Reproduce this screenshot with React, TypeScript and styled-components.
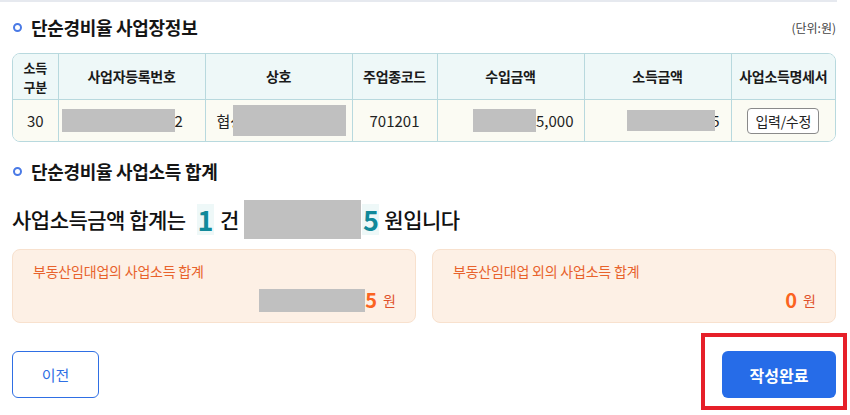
import React from "react";
import styled, { createGlobalStyle } from "styled-components";

const GlobalStyle = createGlobalStyle`
  html, body {
    margin: 0;
    padding: 0;
    background: #fff;
  }
  body {
    font-family: "Noto Sans CJK KR", "Noto Sans", sans-serif;
    color: #111;
  }
`;

const Page = styled.div`
  width: 850px;
  height: 415px;
  overflow: hidden;
  box-sizing: border-box;
  position: relative;
`;

const TopRule = styled.div`
  height: 2px;
  width: 837px;
  background: #e6e9ef;
`;

const Content = styled.div`
  padding: 0 14px 0 12px;
`;

const SectionHeader = styled.div<{ $top: number }>`
  margin-top: ${(p) => p.$top}px;
  height: 24px;
  display: flex;
  align-items: center;
  justify-content: space-between;
`;

const Title = styled.h2`
  margin: 0;
  display: flex;
  align-items: center;
  gap: 9px;
  font-size: 18px;
  font-weight: 700;
  letter-spacing: -0.3px;
  color: #151515;

  &::before {
    content: "";
    width: 5px;
    height: 5px;
    margin-left: 1px;
    border: 2px solid #4a7ae6;
    border-radius: 50%;
  }
`;

const Unit = styled.span`
  font-size: 12px;
  color: #444;
`;

const TableWrap = styled.div`
  margin-top: 14px;
  border: 1px solid #b8d9de;
  border-radius: 8px;
  overflow: hidden;
`;

const Table = styled.table`
  width: 100%;
  border-collapse: collapse;
  table-layout: fixed;
`;

const Th = styled.th<{ $stacked?: boolean }>`
  height: 45px;
  padding: 0;
  background: #eef8f8;
  border-right: 1px solid #b8d9de;
  border-bottom: 1px solid #b8d9de;
  font-size: ${(p) => (p.$stacked ? 13 : 14)}px;
  font-weight: 600;
  letter-spacing: -0.3px;
  line-height: ${(p) => (p.$stacked ? 19 : 17)}px;
  color: #1a1a1a;
  text-align: center;

  &:last-child {
    border-right: none;
  }
`;

const Td = styled.td`
  height: 41px;
  padding: 0;
  background: #fbfbf3;
  border-right: 1px solid #b8d9de;
  font-size: 15px;
  color: #222;
  white-space: nowrap;

  &:last-child {
    border-right: none;
  }
`;

const Cell = styled.div<{ $align?: "left" | "center" | "right"; $pad?: number }>`
  display: flex;
  align-items: center;
  justify-content: ${(p) =>
    p.$align === "left" ? "flex-start" : p.$align === "right" ? "flex-end" : "center"};
  padding: 0 ${(p) => p.$pad ?? 0}px;
  white-space: nowrap;
`;

const Masked = styled.span<{ $w: number; $h: number; $overlap?: number }>`
  display: inline-block;
  width: ${(p) => p.$w}px;
  height: ${(p) => p.$h}px;
  background: #c0c0c0;
  position: relative;
  z-index: 1;
  margin-left: ${(p) => -(p.$overlap ?? 0)}px;
  flex-shrink: 0;
`;

const Tucked = styled.span<{ $by: number }>`
  margin-left: ${(p) => -p.$by}px;
`;

const SmallButton = styled.button`
  width: 72px;
  height: 26px;
  padding: 0;
  border: 1px solid #8a8a8a;
  border-radius: 4px;
  background: #fff;
  font-family: inherit;
  font-size: 14px;
  letter-spacing: -0.3px;
  color: #222;
`;

const Sentence = styled.p`
  margin: 16px 0 0;
  height: 40px;
  display: flex;
  align-items: center;
  font-size: 21px;
  font-weight: 500;
  letter-spacing: -0.5px;
  color: #111;
  white-space: nowrap;
`;

const Count = styled.strong`
  display: inline-flex;
  align-items: center;
  justify-content: center;
  height: 31px;
  padding: 0 1px;
  background: #eef8f8;
  color: #11899a;
  font-size: 27px;
  font-weight: 700;
  line-height: 1;
`;

const Word = styled.span<{ $left?: number }>`
  display: inline-flex;
  align-items: center;
  margin-left: ${(p) => p.$left ?? 0}px;
`;

const Cards = styled.div`
  margin-top: 10px;
  display: grid;
  grid-template-columns: 1fr 1fr;
  gap: 16px;
`;

const Card = styled.div`
  box-sizing: border-box;
  height: 74px;
  padding: 12px 19px 0 20px;
  background: #fdf0e5;
  border: 1px solid #f8e1ce;
  border-radius: 8px;
`;

const CardTitle = styled.div`
  font-size: 14px;
  line-height: 18px;
  letter-spacing: -0.2px;
  color: #e8622c;
`;

const CardValue = styled.div`
  margin-top: 8px;
  display: flex;
  justify-content: flex-end;
  align-items: center;
  height: 24px;
`;

const Amount = styled.span`
  font-size: 20px;
  font-weight: 700;
  color: #fb6321;
  line-height: 1;
`;

const Won = styled.span`
  margin-left: 6px;
  font-size: 14px;
  color: #e0502c;
`;

const Footer = styled.div`
  margin-top: 28px;
  display: flex;
  justify-content: space-between;
  align-items: center;
`;

const PrevButton = styled.button`
  width: 87px;
  height: 47px;
  border: 1px solid #2f6fe4;
  border-radius: 6px;
  background: #fff;
  font-family: inherit;
  font-size: 15px;
  color: #2f6fe4;
`;

const DoneWrap = styled.div`
  position: relative;
`;

const DoneButton = styled.button`
  width: 114px;
  height: 47px;
  border: none;
  border-radius: 6px;
  background: #266ce8;
  font-family: inherit;
  font-size: 16px;
  font-weight: 700;
  color: #fff;
`;

const Highlight = styled.span`
  position: absolute;
  left: -21px;
  top: -18px;
  right: -11px;
  bottom: -12px;
  border: 4px solid #e61f29;
  pointer-events: none;
`;

const columns = [45, 147, 147, 85, 147, 147, 104];

export default function App() {
  return (
    <Page>
      <GlobalStyle />
      <TopRule />
      <Content>
        <SectionHeader $top={13}>
          <Title>단순경비율 사업장정보</Title>
          <Unit>(단위:원)</Unit>
        </SectionHeader>

        <TableWrap>
          <Table>
            <colgroup>
              {columns.map((w, i) => (
                <col key={i} style={{ width: w }} />
              ))}
            </colgroup>
            <thead>
              <tr>
                <Th $stacked>
                  소득
                  <br />
                  구분
                </Th>
                <Th>사업자등록번호</Th>
                <Th>상호</Th>
                <Th>주업종코드</Th>
                <Th>수입금액</Th>
                <Th>소득금액</Th>
                <Th>사업소득명세서</Th>
              </tr>
            </thead>
            <tbody>
              <tr>
                <Td>
                  <Cell>30</Cell>
                </Td>
                <Td>
                  <Cell $align="left" $pad={3}>
                    <Masked $w={113} $h={23} />
                    2
                  </Cell>
                </Td>
                <Td>
                  <Cell $align="left" $pad={11}>
                    협상
                    <Masked $w={113} $h={31} $overlap={11} />
                  </Cell>
                </Td>
                <Td>
                  <Cell>701201</Cell>
                </Td>
                <Td>
                  <Cell $align="right" $pad={10}>
                    <Masked $w={63} $h={23} />
                    5,000
                  </Cell>
                </Td>
                <Td>
                  <Cell $align="right" $pad={11}>
                    <Masked $w={88} $h={21} />
                    <Tucked $by={4}>5</Tucked>
                  </Cell>
                </Td>
                <Td>
                  <Cell>
                    <SmallButton>입력/수정</SmallButton>
                  </Cell>
                </Td>
              </tr>
            </tbody>
          </Table>
        </TableWrap>

        <SectionHeader $top={17}>
          <Title>단순경비율 사업소득 합계</Title>
        </SectionHeader>

        <Sentence>
          사업소득금액 합계는
          <Word $left={11}>
            <Count>1</Count>
          </Word>
          <Word $left={6}>건</Word>
          <Word $left={5}>
            <Masked $w={117} $h={39} />
          </Word>
          <Word $left={1}>
            <Count>5</Count>
          </Word>
          <Word $left={5}>원입니다</Word>
        </Sentence>

        <Cards>
          <Card>
            <CardTitle>부동산임대업의 사업소득 합계</CardTitle>
            <CardValue>
              <Masked $w={106} $h={23} />
              <Amount>5</Amount>
              <Won>원</Won>
            </CardValue>
          </Card>
          <Card>
            <CardTitle>부동산임대업 외의 사업소득 합계</CardTitle>
            <CardValue>
              <Amount>0</Amount>
              <Won>원</Won>
            </CardValue>
          </Card>
        </Cards>

        <Footer>
          <PrevButton>이전</PrevButton>
          <DoneWrap>
            <DoneButton>작성완료</DoneButton>
            <Highlight />
          </DoneWrap>
        </Footer>
      </Content>
    </Page>
  );
}
